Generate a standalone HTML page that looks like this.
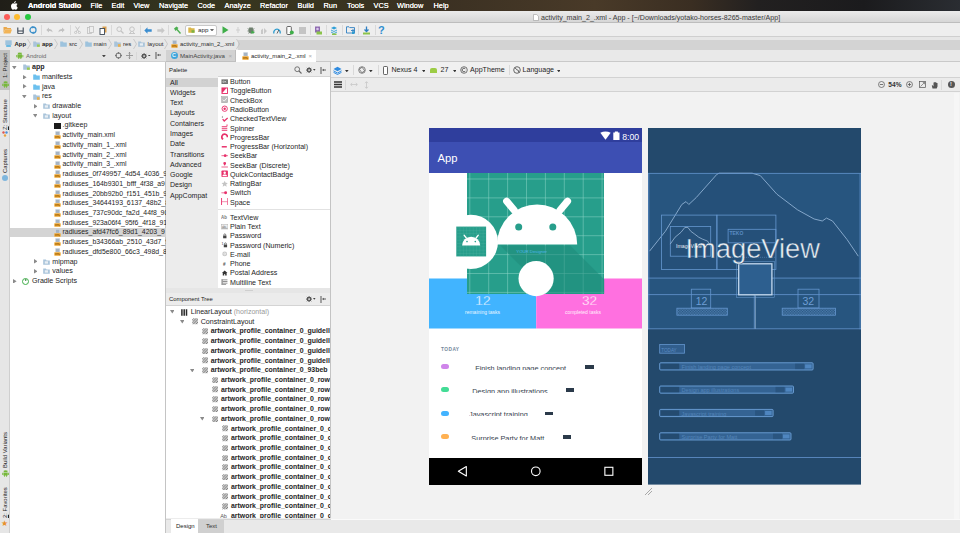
<!DOCTYPE html>
<html><head><meta charset="utf-8"><title>Android Studio</title>
<style>
*{box-sizing:border-box;margin:0;padding:0}
html,body{width:960px;height:533px;overflow:hidden;background:#ececec;font-family:"Liberation Sans",sans-serif;font-size:7.1px;color:#222}
#root{position:absolute;left:0;top:0;width:960px;height:533px;overflow:hidden}
#root div,#root span,#root svg{position:absolute;white-space:nowrap}
.t{line-height:10px;height:10px;font-size:7.1px;color:#1e1e1e}
.s{line-height:10px;height:10px;font-size:6px;color:#2a2a2a}
.b{font-weight:bold}
#menubar{left:0;top:0;width:960px;height:11px;background:linear-gradient(90deg,#201e18 0,#2a2a1c 10%,#37371f 20%,#38341f 33%,#3a3022 45%,#493a28 62%,#3a2e22 72%,#222020 79%,#1b1b1d 90%,#2a2d32 100%)}
#menubar span{color:#fff;font-size:7.4px;line-height:11px;top:0;height:11px;text-shadow:0 0 .3px #fff}
#titlebar{left:0;top:11px;width:960px;height:12px;background:linear-gradient(#ebebeb,#d6d6d6);border-bottom:1px solid #bdbdbd}
#toolbar{left:0;top:23px;width:960px;height:14px;background:#eeeeee;border-bottom:1px solid #cfcfcf}
#navstrip{left:0;top:37px;width:960px;height:3px;background:#e6e6e6}
#navbar{left:0;top:39.5px;width:960px;height:10px;background:#d3d3d3}
#crumbs{left:0;top:-2px;width:238px;height:12px;background:#e7e7e7}
#tabrow{left:166px;top:49.5px;width:794px;height:12.5px;background:#e9e9e9;border-bottom:1px solid #c9c9c9}
#lstrip{left:0;top:49.5px;width:10px;height:484px;background:#e6e6e6;border-right:1px solid #cfcfcf}
.vt{transform-origin:0 0;transform:rotate(-90deg);font-size:5.9px;line-height:10px;height:10px;color:#222}
#proj{left:10px;top:49.5px;width:156px;height:484px;background:#fff;border-right:1px solid #c4c4c4}
#projhead{left:0;top:0;width:156px;height:12.5px;background:#e4e4e4;border-bottom:1px solid #cfcfcf}
.row{left:0;width:156px;height:9.72px}
.row span{top:-0.2px}
.arr{width:0;height:0;border-style:solid}
.ar{border-width:2.3px 0 2.3px 3.6px;border-color:transparent transparent transparent #8a8a8a}
.ad{border-width:3.6px 2.3px 0 2.3px;border-color:#8a8a8a transparent transparent transparent}
.sep{width:1px;background:#d9d9d9}
#palette{left:166px;top:62px;width:165px;height:230.5px;background:#fff;overflow:hidden;border-right:1px solid #c4c4c4}
#ctree{left:166px;top:292.5px;width:165px;height:225.5px;background:#fff;border-right:1px solid #c4c4c4;overflow:hidden}
.ph{left:0;top:0;width:164px;height:13px;background:#ececec;border-bottom:1px solid #d4d4d4}
#design{left:331px;top:62px;width:629px;height:471px;background:#f2f2f2}
</style></head><body><div id="root">
<div id="menubar"><svg style="left:10.800px;top:.8px" width="7" height="8.800" viewBox="0 0 14 17.600"><path fill="#fff" d="M9.800 4.300c1.300 0 2.500.6 3.300 1.700-1.300.8-1.900 1.900-1.900 3.300 0 1.600.9 2.900 2.300 3.500-.3.900-.7 1.700-1.200 2.500-.8 1.200-1.600 2.100-2.700 2.100s-1.500-.7-2.800-.7-1.700.7-2.800.7S2.200 16.500 1.400 15.300C.5 13.900 0 12.100 0 10.400c0-3.200 2-5.900 4.500-5.900 1.100 0 2 .7 2.700.7s1.600-.9 2.600-.9zM9.700 0c.1 1.100-.3 2.100-.9 2.800-.7.800-1.700 1.400-2.700 1.300-.1-1 .4-2.100 1-2.800C7.800.5 8.900 0 9.700 0z"/></svg><span class="b" style="left:28px">Android Studio</span><span style="left:90.5px">File</span><span style="left:111.5px">Edit</span><span style="left:133.5px">View</span><span style="left:159px">Navigate</span><span style="left:197.5px">Code</span><span style="left:224.5px">Analyze</span><span style="left:260px">Refactor</span><span style="left:297.5px">Build</span><span style="left:323.5px">Run</span><span style="left:347px">Tools</span><span style="left:373.5px">VCS</span><span style="left:397px">Window</span><span style="left:433.5px">Help</span></div>
<div id="titlebar"><div style="left:4px;top:3px;width:6.4px;height:6.4px;border-radius:50%;background:#fc5b57"></div><div style="left:14px;top:3px;width:6.4px;height:6.4px;border-radius:50%;background:#fdbb2e"></div><div style="left:24.5px;top:3px;width:6.4px;height:6.4px;border-radius:50%;background:#27c840"></div><svg style="left:533px;top:2.5px" width="6" height="7" viewBox="0 0 6 7"><path d="M.5.5h3.200l1.800 1.800v4.200h-5z" fill="#fff" stroke="#9a9a9a" stroke-width=".6"/></svg><span class="t" style="left:541px;top:1.5px;color:#3a3a3a">activity_main_2_.xml - App - [~/Downloads/yotako-horses-8265-master/App]</span></div>
<div id="toolbar"><svg style="left:2.5px;top:3px" width="9" height="8" viewBox="0 0 9 8"><path d="M.5 1h3l1 1h3.500v1.500H2L.5 7z" fill="#e9a84c"/><path d="M2 3.500h7L7.500 7.500H.5z" fill="#f2b457"/></svg><svg style="left:16.5px;top:3.5px" width="7" height="7" viewBox="0 0 7 7"><path d="M.8.500v6M6.200.500v6M.8 4h5.400" stroke="#3c4754" stroke-width="1.100" fill="none"/><path d="M.8 6.500h5.400" stroke="#3c4754" stroke-width=".8"/></svg><svg style="left:29px;top:3px" width="8" height="8" viewBox="0 0 8 8"><circle cx="4" cy="4" r="3" fill="none" stroke="#3b8fc9" stroke-width="1.300"/><path d="M3 .2l2.500 1-2 1.500zM5 7.800l-2.500-1 2-1.500z" fill="#3b8fc9"/><rect x="3.300" y="2.500" width="1.400" height="3" fill="#eee"/></svg><div class="sep" style="left:41px;top:2px;height:10px"></div><div class="sep" style="left:70px;top:2px;height:10px"></div><div class="sep" style="left:111px;top:2px;height:10px"></div><div class="sep" style="left:140px;top:2px;height:10px"></div><div class="sep" style="left:167.5px;top:2px;height:10px"></div><div class="sep" style="left:310.3px;top:2px;height:10px"></div><div class="sep" style="left:326.3px;top:2px;height:10px"></div><div class="sep" style="left:342.2px;top:2px;height:10px"></div><div class="sep" style="left:358.2px;top:2px;height:10px"></div><div class="sep" style="left:374.5px;top:2px;height:10px"></div><svg style="left:45.5px;top:4px" width="7" height="6" viewBox="0 0 7 6"><path d="M.3 3L3 .5v1.500c2 0 3.500 1 3.700 3.500C6 4.500 4.800 4 3 4v1.500z" fill="#c2c2c2"/></svg><svg style="left:57.5px;top:4px" width="7" height="6" viewBox="0 0 7 6"><path d="M6.700 3L4 .5v1.500C2 2 .5 3 .3 5.500 1 4.500 2.200 4 4 4v1.500z" fill="#c2c2c2"/></svg><svg style="left:73.5px;top:3px" width="7" height="8" viewBox="0 0 7 8"><path d="M1.500.5L5 6M5.500.5L2 6" stroke="#c0c0c0" stroke-width=".9" fill="none"/><circle cx="1.600" cy="6.500" r="1.100" fill="none" stroke="#c0c0c0" stroke-width=".8"/><circle cx="5.400" cy="6.500" r="1.100" fill="none" stroke="#c0c0c0" stroke-width=".8"/></svg><svg style="left:86.5px;top:3px" width="7" height="8" viewBox="0 0 7 8"><rect x=".5" y="1.500" width="4" height="6" fill="#eee" stroke="#c0c0c0" stroke-width=".8"/><rect x="2.500" y=".5" width="4" height="6" fill="#eee" stroke="#c0c0c0" stroke-width=".8"/></svg><svg style="left:99px;top:2.5px" width="8" height="9" viewBox="0 0 8 9"><rect x="3.500" y=".5" width="4" height="6" fill="#d9a050"/><rect x="1" y="2.500" width="4.500" height="6" fill="#fff" stroke="#3c4754" stroke-width=".9"/></svg><svg style="left:115.5px;top:3px" width="8" height="8" viewBox="0 0 8 8"><circle cx="3.200" cy="3.200" r="2.300" fill="none" stroke="#c4c4c4" stroke-width="1"/><path d="M5 5l2.500 2.500" stroke="#c4c4c4" stroke-width="1.200"/></svg><svg style="left:127.5px;top:3px" width="8" height="8" viewBox="0 0 8 8"><circle cx="4" cy="3.200" r="2.300" fill="none" stroke="#c4c4c4" stroke-width="1"/><path d="M1 7.500h6M2 7.500l1-2M6 7.500l-1-2" stroke="#c4c4c4" stroke-width=".9"/></svg><svg style="left:144px;top:3.5px" width="8" height="7" viewBox="0 0 8 7"><path d="M.3 3.500L3.500.3v2h4.200v2.400H3.500v2z" fill="#3a8dd0"/></svg><svg style="left:156.5px;top:3.5px" width="8" height="7" viewBox="0 0 8 7"><path d="M7.700 3.500L4.500.3v2H.3v2.400h4.200v2z" fill="#c8c8c8"/></svg><svg style="left:172.5px;top:3px" width="9" height="8" viewBox="0 0 9 8"><path d="M1 2.500L3.500.5l2 1.500-1 1L8 7l-1 1-3.500-4-1 1z" fill="#4caf50"/></svg><div style="left:184.5px;top:1.500px;width:32px;height:11px;background:#fff;border:1px solid #c8c8c8;border-radius:2px"></div><svg style="left:187.5px;top:3.5px" width="7" height="6" viewBox="0 0 7 6"><path d="M.3.500h2.500l.8.800h3v4.400H.3z" fill="#d9b64a"/><rect x="3.500" y="3.200" width="3" height="2.500" fill="#7cb342"/></svg><span class="s" style="left:198px;top:1.700px;font-size:6.200px">app</span><svg style="left:210px;top:5.8px" width="4" height="2.6" viewBox="0 0 4 2.6"><path d="M0 0H4L2.0 2.6z" fill="#666"/></svg><svg style="left:221.5px;top:3px" width="7" height="8" viewBox="0 0 7 8"><path d="M.5.3L6.500 4 .5 7.700z" fill="#3fae49"/></svg><svg style="left:235.5px;top:4px" width="4" height="6" viewBox="0 0 4 6"><path d="M2 0v6M0 3h4" stroke="#cfcfcf" stroke-width="1"/></svg><svg style="left:247px;top:3px" width="8" height="8" viewBox="0 0 8 8"><ellipse cx="4" cy="4.500" rx="2.600" ry="3" fill="#6e7f6e"/><path d="M.5 2.500l2 1M7.500 2.500l-2 1M.3 5h1.500M7.700 5H6.200M1 7.500l1.500-1M7 7.500L5.500 6.500M2.500 1L3.200 2M5.500 1L4.800 2" stroke="#6e7f6e" stroke-width=".6"/><path d="M4.500 4.500L8 6.200 4.500 8z" fill="#3fae49"/></svg><svg style="left:259.5px;top:3.5px" width="8" height="7" viewBox="0 0 8 7"><path d="M1 7V3l2-1.500v5.500zM4 7V1l3 3z" fill="#c8c8c8"/></svg><svg style="left:272.5px;top:3.5px" width="8" height="7" viewBox="0 0 8 7"><path d="M1 6.500A3.200 3.200 0 1 1 7 6.500" fill="none" stroke="#2f9ccf" stroke-width="1.300"/><path d="M4 6.500L5.800 3" stroke="#444" stroke-width=".8"/></svg><svg style="left:285.5px;top:2.5px" width="8" height="9" viewBox="0 0 8 9"><rect x=".8" y=".5" width="4.500" height="8" rx=".8" fill="#fff" stroke="#555" stroke-width=".9"/><circle cx="5.800" cy="6.500" r="2" fill="#3fae49"/></svg><div style="left:298.5px;top:3.500px;width:7px;height:7px;background:#c4c4c4"></div><svg style="left:313.5px;top:2.5px" width="8" height="9" viewBox="0 0 8 9"><rect x="1" y=".5" width="5" height="6" fill="#8e6bb0"/><circle cx="3.500" cy="3" r="1.300" fill="#d9c7ea"/><rect x="2.500" y="5.500" width="5.500" height="3" fill="#8bc34a"/></svg><svg style="left:329.5px;top:2.5px" width="8" height="9" viewBox="0 0 8 9"><path d="M1 2l3-1.500L7 2 4 3.500z" fill="#30a0d8"/><path d="M1 4l3 1.500L7 4M1 6l3 1.500L7 6" fill="none" stroke="#30a0d8" stroke-width=".9"/><rect x="2" y="7.500" width="4.500" height="1.500" fill="#8bc34a"/></svg><svg style="left:346px;top:3px" width="9" height="8" viewBox="0 0 9 8"><path d="M.5.800h2.500l.8.800h4.700v5.400H.5z" fill="none" stroke="#2f7fc1" stroke-width=".9"/><path d="M5 4.500h3.500M7 3v3" stroke="#2f7fc1" stroke-width=".9"/><rect x="6" y="5.500" width="2.500" height="2.500" fill="#2f9ccf"/></svg><svg style="left:361.5px;top:2.5px" width="9" height="9" viewBox="0 0 9 9"><path d="M4.500.5v4.500M2.500 3.500l2 2 2-2" fill="none" stroke="#2f7fc1" stroke-width="1.300"/><rect x="1" y="6.500" width="7" height="2" fill="#8bc34a"/></svg><span style="left:378px;top:0;font-size:11px;line-height:14px;height:14px;font-weight:bold;color:#2f8fd0">?</span></div>
<div id="navstrip"></div><div id="navbar"><div id="crumbs"></div><div style="left:0;top:-1px;width:240px;height:10px"><svg style="left:4.5px;top:1.5px" width="7" height="7" viewBox="0 0 7 7"><rect x=".3" y=".3" width="6.400" height="4.800" fill="#9ec3dd"/><rect x="1.200" y="5.300" width="4.600" height="1.400" fill="#35a7e0"/></svg><span class="s b" style="left:14.5px;top:0;color:#222">App</span><svg style="left:27px;top:0px" width="4" height="10" viewBox="0 0 4 10"><path d="M.5 0L3.500 5 .5 10" fill="none" stroke="#bdbdbd" stroke-width=".7"/></svg><svg style="left:32.5px;top:2px" width="7" height="6" viewBox="0 0 7 6"><path d="M.2.500h2.600l.8.900h3.200v4.300H.2z" fill="#a9c4da"/><rect x="4" y="3.500" width="2.800" height="2.300" fill="#9acb4a"/></svg><span class="s b" style="left:42px;top:0;color:#222">app</span><svg style="left:54px;top:0px" width="4" height="10" viewBox="0 0 4 10"><path d="M.5 0L3.500 5 .5 10" fill="none" stroke="#bdbdbd" stroke-width=".7"/></svg><svg style="left:59.5px;top:2px" width="7" height="6" viewBox="0 0 7 6"><path d="M.2.500h2.600l.8.900h3.200v4.300H.2z" fill="#9ec3dd"/></svg><span class="s" style="left:69px;top:0">src</span><svg style="left:79px;top:0px" width="4" height="10" viewBox="0 0 4 10"><path d="M.5 0L3.500 5 .5 10" fill="none" stroke="#bdbdbd" stroke-width=".7"/></svg><svg style="left:84.5px;top:2px" width="7" height="6" viewBox="0 0 7 6"><path d="M.2.500h2.600l.8.900h3.200v4.300H.2z" fill="#9ec3dd"/></svg><span class="s" style="left:93.5px;top:0">main</span><svg style="left:108px;top:0px" width="4" height="10" viewBox="0 0 4 10"><path d="M.5 0L3.500 5 .5 10" fill="none" stroke="#bdbdbd" stroke-width=".7"/></svg><svg style="left:113.5px;top:2px" width="7" height="6" viewBox="0 0 7 6"><path d="M.2.500h2.600l.8.900h3.200v4.300H.2z" fill="#a9c4da"/><rect x="4" y="3.200" width="2.600" height="2.600" fill="#e9b04c"/></svg><span class="s" style="left:123px;top:0">res</span><svg style="left:133px;top:0px" width="4" height="10" viewBox="0 0 4 10"><path d="M.5 0L3.500 5 .5 10" fill="none" stroke="#bdbdbd" stroke-width=".7"/></svg><svg style="left:138px;top:2px" width="7" height="6" viewBox="0 0 7 6"><path d="M.2.500h2.600l.8.900h3.200v4.300H.2z" fill="#a9c4da"/><rect x="1.800" y="2.300" width="3.200" height="2.300" fill="#e8eef4"/></svg><span class="s" style="left:147.5px;top:0">layout</span><svg style="left:163.5px;top:0px" width="4" height="10" viewBox="0 0 4 10"><path d="M.5 0L3.500 5 .5 10" fill="none" stroke="#bdbdbd" stroke-width=".7"/></svg><svg style="left:170.5px;top:1px" width="7" height="8" viewBox="0 0 7 8"><rect x="1.200" y=".3" width="4.800" height="4" fill="#c9d3de"/><path d="M2 1.300h3.200M2 2.300h3.200M2 3.300h3.200" stroke="#7d8fa5" stroke-width=".5"/><rect x=".3" y="4.300" width="6.400" height="3.400" rx=".4" fill="#f0a732"/><path d="M1.300 5.300l1 1.400m0-1.400l-1 1.400M3 6.700V5.300l.6.800.6-.8v1.400M5 5.300v1.400h.9" stroke="#7a4b00" stroke-width=".45" fill="none"/></svg><span class="s" style="left:180px;top:0;font-size:5.850px">activity_main_2_.xml</span><svg style="left:235.5px;top:0px" width="4" height="10" viewBox="0 0 4 10"><path d="M.5 0L3.500 5 .5 10" fill="none" stroke="#bdbdbd" stroke-width=".7"/></svg></div></div>
<div id="tabrow"><div style="left:0;top:0;width:70px;height:12.500px;background:#d2d2d2;border-right:1px solid #bdbdbd;border-bottom:1px solid #c0c0c0"></div><div style="left:4.500px;top:2.500px;width:7px;height:7px;border-radius:50%;background:#3ea6dc"></div><span style="left:6px;top:1.400px;font-size:5.500px;line-height:9px;color:#e8f4fb;font-weight:bold">C</span><span class="s" style="left:14px;top:1.200px;font-size:6.100px;color:#444">MainActivity.java</span><span style="left:62.500px;top:1px;font-size:6px;line-height:10px;color:#aaa">×</span><div style="left:70px;top:0;width:80px;height:12.500px;background:#fff"></div><svg style="left:75.5px;top:2px" width="7" height="8" viewBox="0 0 7 8"><rect x="1.200" y=".3" width="4.800" height="4" fill="#c9d3de"/><path d="M2 1.300h3.200M2 2.300h3.200M2 3.300h3.200" stroke="#7d8fa5" stroke-width=".5"/><rect x=".3" y="4.300" width="6.400" height="3.400" rx=".4" fill="#f0a732"/><path d="M1.300 5.300l1 1.400m0-1.400l-1 1.400M3 6.700V5.300l.6.800.6-.8v1.400M5 5.300v1.400h.9" stroke="#7a4b00" stroke-width=".45" fill="none"/></svg><span class="s" style="left:85px;top:1.200px;font-size:5.900px;color:#222">activity_main_2_.xml</span><span style="left:142.500px;top:1px;font-size:6px;line-height:10px;color:#aaa">×</span></div>
<div id="lstrip"><div style="left:0;top:0;width:10px;height:40.500px;background:#c2c2c2"></div><span class="vt" style="left:.3px;top:28.8px">1: Project</span><svg style="left:1.6px;top:31px" width="7.2" height="7.2" viewBox="0 0 8 8"><path fill="#77b83b" d="M1.600 2.600a2.400 2.200 0 0 1 4.800 0zM1.600 3h4.800v3.100H1.600zM.3 3.100h.9v2.400H.3zM6.800 3.100h.9v2.400h-.9zM2.400 6.100h1v1.500h-1zM4.600 6.100h1v1.500h-1z"/><path d="M2.300.4l.6.900M5.700.4l-.6.900" stroke="#77b83b" stroke-width=".4"/></svg><span class="vt" style="left:.3px;top:80.2px"><u>Z</u>: Structure</span><svg style="left:2px;top:81.5px" width="6" height="6" viewBox="0 0 6 6"><circle cx="1.500" cy="1.500" r="1.200" fill="#e0574f"/><circle cx="4.500" cy="1.500" r="1.200" fill="#4a90d9"/><circle cx="3" cy="4.500" r="1.200" fill="#e9a23b"/></svg><span class="vt" style="left:.3px;top:123.2px">Captures</span><div style="left:2px;top:125.500px;width:6px;height:6px;border-radius:50%;background:#7fb6dd"></div><span class="vt" style="left:.3px;top:418.4px">Build Variants</span><svg style="left:1.6px;top:420px" width="7.2" height="7.2" viewBox="0 0 8 8"><path fill="#77b83b" d="M1.600 2.600a2.400 2.200 0 0 1 4.800 0zM1.600 3h4.800v3.100H1.600zM.3 3.100h.9v2.400H.3zM6.800 3.100h.9v2.400h-.9zM2.400 6.100h1v1.500h-1zM4.600 6.100h1v1.500h-1z"/><path d="M2.300.4l.6.900M5.700.4l-.6.900" stroke="#77b83b" stroke-width=".4"/></svg><span class="vt" style="left:.3px;top:468.1px"><u>2</u>: Favorites</span><span style="left:1px;top:469.500px;font-size:8px;line-height:10px;color:#e8912b">★</span></div>
<div id="proj"><div id="projhead"><svg style="left:6px;top:2.3px" width="7.6" height="7.6" viewBox="0 0 8 8"><path fill="#77b83b" d="M1.600 2.600a2.400 2.200 0 0 1 4.800 0zM1.600 3h4.800v3.100H1.600zM.3 3.100h.9v2.400H.3zM6.800 3.100h.9v2.400h-.9zM2.400 6.100h1v1.500h-1zM4.600 6.100h1v1.500h-1z"/><path d="M2.300.4l.6.900M5.700.4l-.6.900" stroke="#77b83b" stroke-width=".4"/></svg><span class="s" style="left:16px;top:1.200px;font-size:5.900px;color:#666">Android</span><svg style="left:92px;top:5.2px" width="3.8" height="2.4" viewBox="0 0 3.8 2.4"><path d="M0 0H3.8L1.9 2.4z" fill="#444"/></svg><svg style="left:104.5px;top:2.5px" width="7" height="7" viewBox="0 0 7 7"><circle cx="3.500" cy="3.500" r="2.600" fill="none" stroke="#666" stroke-width="1"/><path d="M3.500 0v2M3.500 5v2M0 3.500h2M5 3.500h2" stroke="#666" stroke-width=".7"/></svg><svg style="left:116px;top:2.5px" width="7" height="7" viewBox="0 0 7 7"><path d="M3.500 0v7M0 3.500h7" stroke="#8a8a8a" stroke-width=".8"/><path d="M2.500 1.500l1-1.200 1 1.200M2.500 5.500l1 1.200 1-1.200" fill="none" stroke="#8a8a8a" stroke-width=".6"/></svg><div class="sep" style="left:126px;top:2px;height:8px;background:#d8d8d8"></div><svg style="left:131px;top:3px" width="6.2" height="6.2" viewBox="0 0 7 7"><circle cx="3.500" cy="3.500" r="2" fill="none" stroke="#555" stroke-width="1.400"/><path d="M3.500 0v7M0 3.500h7M1 1l5 5M6 1L1 6" stroke="#555" stroke-width=".9"/><circle cx="3.500" cy="3.500" r="1" fill="#e4e4e4"/></svg><svg style="left:138.3px;top:5.3px" width="2.6" height="1.7" viewBox="0 0 2.6 1.7"><path d="M0 0H2.6L1.3 1.7z" fill="#444"/></svg><svg style="left:144.5px;top:2.5px" width="7" height="7" viewBox="0 0 7 7"><path d="M1 0v7" stroke="#555" stroke-width="1"/><path d="M2.500 3h3.500" stroke="#555" stroke-width=".9"/><path d="M2.300 3l1.500-1.200v2.400z" fill="#555"/></svg></div><div class="row" style="top:12.84px"><svg style="left:2.2px;top:3.3px" width="4.600" height="3.400" viewBox="0 0 4.600 3.400"><path d="M0 0H4.600L2.300 3.400z" fill="#8a8a8a"/></svg><svg style="left:13px;top:2px" width="7" height="6" viewBox="0 0 7 6"><path d="M.2.500h2.600l.8.900h3.200v4.300H.2z" fill="#a9c4da"/><rect x="4" y="3.500" width="2.800" height="2.300" fill="#9acb4a"/></svg><span class="t b" style="left:22px">app</span></div><div class="row" style="top:22.56px"><svg style="left:13.3px;top:2.7px" width="3.600" height="4.600" viewBox="0 0 3.600 4.600"><path d="M0 0L3.600 2.300 0 4.600z" fill="#8a8a8a"/></svg><svg style="left:23px;top:2px" width="7" height="6" viewBox="0 0 7 6"><path d="M.2.500h2.600l.8.900h3.200v4.300H.2z" fill="#6cc0ee"/></svg><span class="t" style="left:32px">manifests</span></div><div class="row" style="top:32.28px"><svg style="left:13.3px;top:2.7px" width="3.600" height="4.600" viewBox="0 0 3.600 4.600"><path d="M0 0L3.600 2.300 0 4.600z" fill="#8a8a8a"/></svg><svg style="left:23px;top:2px" width="7" height="6" viewBox="0 0 7 6"><path d="M.2.500h2.600l.8.900h3.200v4.300H.2z" fill="#6cc0ee"/></svg><span class="t" style="left:32px">java</span></div><div class="row" style="top:42.00px"><svg style="left:12.2px;top:3.3px" width="4.600" height="3.400" viewBox="0 0 4.600 3.400"><path d="M0 0H4.600L2.300 3.400z" fill="#8a8a8a"/></svg><svg style="left:23px;top:2px" width="7" height="6" viewBox="0 0 7 6"><path d="M.2.500h2.600l.8.900h3.200v4.300H.2z" fill="#a9c4da"/><rect x="4" y="3.200" width="2.600" height="2.600" fill="#e9b04c"/></svg><span class="t" style="left:32px">res</span></div><div class="row" style="top:51.72px"><svg style="left:23.8px;top:2.7px" width="3.600" height="4.600" viewBox="0 0 3.600 4.600"><path d="M0 0L3.600 2.300 0 4.600z" fill="#8a8a8a"/></svg><svg style="left:33.3px;top:2px" width="7" height="6" viewBox="0 0 7 6"><path d="M.2.500h2.600l.8.900h3.200v4.300H.2z" fill="#a9c4da"/><rect x="1.800" y="2.300" width="3.200" height="2.300" fill="#e8eef4"/></svg><span class="t" style="left:42.3px">drawable</span></div><div class="row" style="top:61.44px"><svg style="left:22.7px;top:3.3px" width="4.600" height="3.400" viewBox="0 0 4.600 3.400"><path d="M0 0H4.600L2.300 3.400z" fill="#8a8a8a"/></svg><svg style="left:33.3px;top:2px" width="7" height="6" viewBox="0 0 7 6"><path d="M.2.500h2.600l.8.900h3.200v4.300H.2z" fill="#a9c4da"/><rect x="1.800" y="2.300" width="3.200" height="2.300" fill="#e8eef4"/></svg><span class="t" style="left:42.3px">layout</span></div><div class="row" style="top:71.16px"><div style="left:43.5px;top:2px;width:7px;height:6px;background:#1c1c1c"></div><span class="t" style="left:52.5px">.gitkeep</span></div><div class="row" style="top:80.88px"><svg style="left:43.5px;top:1px" width="7" height="8" viewBox="0 0 7 8"><rect x="1.200" y=".3" width="4.800" height="4" fill="#c9d3de"/><path d="M2 1.300h3.200M2 2.300h3.200M2 3.300h3.200" stroke="#7d8fa5" stroke-width=".5"/><rect x=".3" y="4.300" width="6.400" height="3.400" rx=".4" fill="#f0a732"/><path d="M1.300 5.300l1 1.400m0-1.400l-1 1.400M3 6.700V5.300l.6.800.6-.8v1.400M5 5.300v1.400h.9" stroke="#7a4b00" stroke-width=".45" fill="none"/></svg><span class="t" style="left:52.5px;font-size:6.900px">activity_main.xml</span></div><div class="row" style="top:90.60px"><svg style="left:43.5px;top:1px" width="7" height="8" viewBox="0 0 7 8"><rect x="1.200" y=".3" width="4.800" height="4" fill="#c9d3de"/><path d="M2 1.300h3.200M2 2.300h3.200M2 3.300h3.200" stroke="#7d8fa5" stroke-width=".5"/><rect x=".3" y="4.300" width="6.400" height="3.400" rx=".4" fill="#f0a732"/><path d="M1.300 5.300l1 1.400m0-1.400l-1 1.400M3 6.700V5.300l.6.800.6-.8v1.400M5 5.300v1.400h.9" stroke="#7a4b00" stroke-width=".45" fill="none"/></svg><span class="t" style="left:52.5px;font-size:6.900px">activity_main_1_.xml</span></div><div class="row" style="top:100.32px"><svg style="left:43.5px;top:1px" width="7" height="8" viewBox="0 0 7 8"><rect x="1.200" y=".3" width="4.800" height="4" fill="#c9d3de"/><path d="M2 1.300h3.200M2 2.300h3.200M2 3.300h3.200" stroke="#7d8fa5" stroke-width=".5"/><rect x=".3" y="4.300" width="6.400" height="3.400" rx=".4" fill="#f0a732"/><path d="M1.300 5.300l1 1.400m0-1.400l-1 1.400M3 6.700V5.300l.6.800.6-.8v1.400M5 5.300v1.400h.9" stroke="#7a4b00" stroke-width=".45" fill="none"/></svg><span class="t" style="left:52.5px;font-size:6.900px">activity_main_2_.xml</span></div><div class="row" style="top:110.04px"><svg style="left:43.5px;top:1px" width="7" height="8" viewBox="0 0 7 8"><rect x="1.200" y=".3" width="4.800" height="4" fill="#c9d3de"/><path d="M2 1.300h3.200M2 2.300h3.200M2 3.300h3.200" stroke="#7d8fa5" stroke-width=".5"/><rect x=".3" y="4.300" width="6.400" height="3.400" rx=".4" fill="#f0a732"/><path d="M1.300 5.300l1 1.400m0-1.400l-1 1.400M3 6.700V5.300l.6.800.6-.8v1.400M5 5.300v1.400h.9" stroke="#7a4b00" stroke-width=".45" fill="none"/></svg><span class="t" style="left:52.5px;font-size:6.900px">activity_main_3_.xml</span></div><div class="row" style="top:119.76px"><svg style="left:43.5px;top:1px" width="7" height="8" viewBox="0 0 7 8"><rect x="1.200" y=".3" width="4.800" height="4" fill="#c9d3de"/><path d="M2 1.300h3.200M2 2.300h3.200M2 3.300h3.200" stroke="#7d8fa5" stroke-width=".5"/><rect x=".3" y="4.300" width="6.400" height="3.400" rx=".4" fill="#f0a732"/><path d="M1.300 5.300l1 1.400m0-1.400l-1 1.400M3 6.700V5.300l.6.800.6-.8v1.400M5 5.300v1.400h.9" stroke="#7a4b00" stroke-width=".45" fill="none"/></svg><span class="t" style="left:52.5px;font-size:6.900px">radiuses_0f749957_4d54_4036_9</span></div><div class="row" style="top:129.48px"><svg style="left:43.5px;top:1px" width="7" height="8" viewBox="0 0 7 8"><rect x="1.200" y=".3" width="4.800" height="4" fill="#c9d3de"/><path d="M2 1.300h3.200M2 2.300h3.200M2 3.300h3.200" stroke="#7d8fa5" stroke-width=".5"/><rect x=".3" y="4.300" width="6.400" height="3.400" rx=".4" fill="#f0a732"/><path d="M1.300 5.300l1 1.400m0-1.400l-1 1.400M3 6.700V5.300l.6.800.6-.8v1.400M5 5.300v1.400h.9" stroke="#7a4b00" stroke-width=".45" fill="none"/></svg><span class="t" style="left:52.5px;font-size:6.900px">radiuses_164b9301_bfff_4f38_a9</span></div><div class="row" style="top:139.20px"><svg style="left:43.5px;top:1px" width="7" height="8" viewBox="0 0 7 8"><rect x="1.200" y=".3" width="4.800" height="4" fill="#c9d3de"/><path d="M2 1.300h3.200M2 2.300h3.200M2 3.300h3.200" stroke="#7d8fa5" stroke-width=".5"/><rect x=".3" y="4.300" width="6.400" height="3.400" rx=".4" fill="#f0a732"/><path d="M1.300 5.300l1 1.400m0-1.400l-1 1.400M3 6.700V5.300l.6.800.6-.8v1.400M5 5.300v1.400h.9" stroke="#7a4b00" stroke-width=".45" fill="none"/></svg><span class="t" style="left:52.5px;font-size:6.900px">radiuses_20bb92b0_f151_451b_9</span></div><div class="row" style="top:148.92px"><svg style="left:43.5px;top:1px" width="7" height="8" viewBox="0 0 7 8"><rect x="1.200" y=".3" width="4.800" height="4" fill="#c9d3de"/><path d="M2 1.300h3.200M2 2.300h3.200M2 3.300h3.200" stroke="#7d8fa5" stroke-width=".5"/><rect x=".3" y="4.300" width="6.400" height="3.400" rx=".4" fill="#f0a732"/><path d="M1.300 5.300l1 1.400m0-1.400l-1 1.400M3 6.700V5.300l.6.800.6-.8v1.400M5 5.300v1.400h.9" stroke="#7a4b00" stroke-width=".45" fill="none"/></svg><span class="t" style="left:52.5px;font-size:6.900px">radiuses_34644193_6137_48b2_8</span></div><div class="row" style="top:158.64px"><svg style="left:43.5px;top:1px" width="7" height="8" viewBox="0 0 7 8"><rect x="1.200" y=".3" width="4.800" height="4" fill="#c9d3de"/><path d="M2 1.300h3.200M2 2.300h3.200M2 3.300h3.200" stroke="#7d8fa5" stroke-width=".5"/><rect x=".3" y="4.300" width="6.400" height="3.400" rx=".4" fill="#f0a732"/><path d="M1.300 5.300l1 1.400m0-1.400l-1 1.400M3 6.700V5.300l.6.800.6-.8v1.400M5 5.300v1.400h.9" stroke="#7a4b00" stroke-width=".45" fill="none"/></svg><span class="t" style="left:52.5px;font-size:6.900px">radiuses_737c90dc_fa2d_44f8_90</span></div><div class="row" style="top:168.36px"><svg style="left:43.5px;top:1px" width="7" height="8" viewBox="0 0 7 8"><rect x="1.200" y=".3" width="4.800" height="4" fill="#c9d3de"/><path d="M2 1.300h3.200M2 2.300h3.200M2 3.300h3.200" stroke="#7d8fa5" stroke-width=".5"/><rect x=".3" y="4.300" width="6.400" height="3.400" rx=".4" fill="#f0a732"/><path d="M1.300 5.300l1 1.400m0-1.400l-1 1.400M3 6.700V5.300l.6.800.6-.8v1.400M5 5.300v1.400h.9" stroke="#7a4b00" stroke-width=".45" fill="none"/></svg><span class="t" style="left:52.5px;font-size:6.900px">radiuses_923a06f4_95f6_4f18_91</span></div><div class="row" style="top:178.08px;background:#d4d4d4"><svg style="left:43.5px;top:1px" width="7" height="8" viewBox="0 0 7 8"><rect x="1.200" y=".3" width="4.800" height="4" fill="#c9d3de"/><path d="M2 1.300h3.200M2 2.300h3.200M2 3.300h3.200" stroke="#7d8fa5" stroke-width=".5"/><rect x=".3" y="4.300" width="6.400" height="3.400" rx=".4" fill="#f0a732"/><path d="M1.300 5.300l1 1.400m0-1.400l-1 1.400M3 6.700V5.300l.6.800.6-.8v1.400M5 5.300v1.400h.9" stroke="#7a4b00" stroke-width=".45" fill="none"/></svg><span class="t" style="left:52.5px;font-size:6.900px">radiuses_afd47fc6_89d1_4203_9</span></div><div class="row" style="top:187.80px"><svg style="left:43.5px;top:1px" width="7" height="8" viewBox="0 0 7 8"><rect x="1.200" y=".3" width="4.800" height="4" fill="#c9d3de"/><path d="M2 1.300h3.200M2 2.300h3.200M2 3.300h3.200" stroke="#7d8fa5" stroke-width=".5"/><rect x=".3" y="4.300" width="6.400" height="3.400" rx=".4" fill="#f0a732"/><path d="M1.300 5.300l1 1.400m0-1.400l-1 1.400M3 6.700V5.300l.6.800.6-.8v1.400M5 5.300v1.400h.9" stroke="#7a4b00" stroke-width=".45" fill="none"/></svg><span class="t" style="left:52.5px;font-size:6.900px">radiuses_b34366ab_2510_43d7_9</span></div><div class="row" style="top:197.52px"><svg style="left:43.5px;top:1px" width="7" height="8" viewBox="0 0 7 8"><rect x="1.200" y=".3" width="4.800" height="4" fill="#c9d3de"/><path d="M2 1.300h3.200M2 2.300h3.200M2 3.300h3.200" stroke="#7d8fa5" stroke-width=".5"/><rect x=".3" y="4.300" width="6.400" height="3.400" rx=".4" fill="#f0a732"/><path d="M1.300 5.300l1 1.400m0-1.400l-1 1.400M3 6.700V5.300l.6.800.6-.8v1.400M5 5.300v1.400h.9" stroke="#7a4b00" stroke-width=".45" fill="none"/></svg><span class="t" style="left:52.5px;font-size:6.900px">radiuses_dfd5e800_66c3_498d_8</span></div><div class="row" style="top:207.24px"><svg style="left:23.8px;top:2.7px" width="3.600" height="4.600" viewBox="0 0 3.600 4.600"><path d="M0 0L3.600 2.300 0 4.600z" fill="#8a8a8a"/></svg><svg style="left:33.3px;top:2px" width="7" height="6" viewBox="0 0 7 6"><path d="M.2.500h2.600l.8.900h3.200v4.300H.2z" fill="#a9c4da"/><rect x="1.800" y="2.300" width="3.200" height="2.300" fill="#e8eef4"/></svg><span class="t" style="left:42.3px">mipmap</span></div><div class="row" style="top:216.96px"><svg style="left:23.8px;top:2.7px" width="3.600" height="4.600" viewBox="0 0 3.600 4.600"><path d="M0 0L3.600 2.300 0 4.600z" fill="#8a8a8a"/></svg><svg style="left:33.3px;top:2px" width="7" height="6" viewBox="0 0 7 6"><path d="M.2.500h2.600l.8.900h3.200v4.300H.2z" fill="#a9c4da"/><rect x="1.800" y="2.300" width="3.200" height="2.300" fill="#e8eef4"/></svg><span class="t" style="left:42.3px">values</span></div><div class="row" style="top:226.68px"><svg style="left:3.3px;top:2.7px" width="3.600" height="4.600" viewBox="0 0 3.600 4.600"><path d="M0 0L3.600 2.300 0 4.600z" fill="#8a8a8a"/></svg><div style="left:12px;top:1.500px;width:7px;height:7px;border-radius:50%;border:1.200px solid #3fae49"></div><div class="arr" style="left:14.5px;top:3.200px;border-width:1.800px 0 1.800px 2.800px;border-color:transparent transparent transparent #2b7a33"></div><span class="t" style="left:22px">Gradle Scripts</span></div></div>
<div id="palette"><div class="ph" style="top:0;height:14.500px"><span class="s" style="left:3px;top:3px;font-size:5.900px;color:#222">Palette</span><svg style="left:127.5px;top:4px" width="8" height="8" viewBox="0 0 8 8"><circle cx="3.200" cy="3.200" r="2.400" fill="none" stroke="#666" stroke-width=".9"/><path d="M5 5l2.500 2.500" stroke="#666" stroke-width="1.100"/></svg><svg style="left:140px;top:4.8px" width="6.2" height="6.2" viewBox="0 0 7 7"><circle cx="3.500" cy="3.500" r="2" fill="none" stroke="#555" stroke-width="1.400"/><path d="M3.500 0v7M0 3.500h7M1 1l5 5M6 1L1 6" stroke="#555" stroke-width=".9"/><circle cx="3.500" cy="3.500" r="1" fill="#ececec"/></svg><svg style="left:147.3px;top:7.3px" width="2.6" height="1.7" viewBox="0 0 2.6 1.7"><path d="M0 0H2.6L1.3 1.7z" fill="#444"/></svg><svg style="left:154px;top:4.5px" width="7" height="7" viewBox="0 0 7 7"><path d="M1 0v7" stroke="#555" stroke-width="1"/><path d="M2.500 3h3.500" stroke="#555" stroke-width=".9"/><path d="M2.300 3l1.500-1.200v2.400z" fill="#555"/></svg></div><div style="left:0;top:14px;width:52px;height:216.500px;background:#ececec"></div><div style="left:0;top:15.500px;width:52px;height:9.500px;background:#d2d2d2"></div><span class="t" style="left:4px;top:15.60px;font-size:7.050px">All</span><span class="t" style="left:4px;top:25.88px;font-size:7.050px">Widgets</span><span class="t" style="left:4px;top:36.16px;font-size:7.050px">Text</span><span class="t" style="left:4px;top:46.44px;font-size:7.050px">Layouts</span><span class="t" style="left:4px;top:56.72px;font-size:7.050px">Containers</span><span class="t" style="left:4px;top:67.00px;font-size:7.050px">Images</span><span class="t" style="left:4px;top:77.28px;font-size:7.050px">Date</span><span class="t" style="left:4px;top:87.56px;font-size:7.050px">Transitions</span><span class="t" style="left:4px;top:97.84px;font-size:7.050px">Advanced</span><span class="t" style="left:4px;top:108.12px;font-size:7.050px">Google</span><span class="t" style="left:4px;top:118.40px;font-size:7.050px">Design</span><span class="t" style="left:4px;top:128.68px;font-size:7.050px">AppCompat</span><svg style="left:54.7px;top:15.7px" width="7.4" height="7.4" viewBox="0 0 8 8"><rect x=".5" y="1.500" width="7" height="5" fill="#6f6f6f"/><path d="M2 3.200h1.500v1.600H2zM4.500 3.200v1.600M4.500 4l1.300-.8M4.500 4l1.300.8" stroke="#e8e8e8" stroke-width=".55" fill="none"/></svg><span class="t" style="left:64px;top:15.20px">Button</span><svg style="left:54.7px;top:24.96px" width="7.4" height="7.4" viewBox="0 0 8 8"><rect x=".5" y=".5" width="7" height="7" fill="#e8316b"/><path d="M1.500 6.500L5.500 1.500h1v5z" fill="#fff"/></svg><span class="t" style="left:64px;top:24.46px">ToggleButton</span><svg style="left:54.7px;top:34.22px" width="7.4" height="7.4" viewBox="0 0 8 8"><rect x=".7" y=".7" width="6.600" height="6.600" fill="#bdbdbd" stroke="#9a9a9a" stroke-width=".5"/><path d="M2 4l1.500 1.500 3-3.500" stroke="#fff" stroke-width=".9" fill="none"/></svg><span class="t" style="left:64px;top:33.72px">CheckBox</span><svg style="left:54.7px;top:43.48px" width="7.4" height="7.4" viewBox="0 0 8 8"><circle cx="4" cy="4" r="2.900" fill="none" stroke="#e8316b" stroke-width="1"/><circle cx="4" cy="4" r="1.300" fill="#e8316b"/></svg><span class="t" style="left:64px;top:42.98px">RadioButton</span><svg style="left:54.7px;top:52.74px" width="7.4" height="7.4" viewBox="0 0 8 8"><path d="M1.800 4.500l1.700 2 3.700-3.300" stroke="#e8316b" stroke-width="1.400" fill="none"/><path d="M.8 2.200h1.500M1.600 1v2.300" stroke="#777" stroke-width=".5"/></svg><span class="t" style="left:64px;top:52.24px">CheckedTextView</span><svg style="left:54.7px;top:62.0px" width="7.4" height="7.4" viewBox="0 0 8 8"><path d="M.8 3h6M.8 5.200h6M.8 7.300h6" stroke="#e8316b" stroke-width="1.100"/><path d="M5.200 1.700L6.500.3l1.300 1.400z" fill="#e8316b"/></svg><span class="t" style="left:64px;top:61.50px">Spinner</span><svg style="left:54.7px;top:71.26px" width="7.4" height="7.4" viewBox="0 0 8 8"><path d="M2.300 6.800A3 3 0 1 1 6.900 4.600" fill="none" stroke="#e8316b" stroke-width="1.800"/></svg><span class="t" style="left:64px;top:70.76px">ProgressBar</span><svg style="left:54.7px;top:80.52px" width="7.4" height="7.4" viewBox="0 0 8 8"><rect x=".8" y="3.300" width="5.500" height="1.600" fill="#e8316b"/></svg><span class="t" style="left:64px;top:80.02px">ProgressBar (Horizontal)</span><svg style="left:54.7px;top:89.78px" width="7.4" height="7.4" viewBox="0 0 8 8"><path d="M.5 4h7" stroke="#e8316b" stroke-width=".8"/><circle cx="4.500" cy="4" r="1.500" fill="#e8316b"/></svg><span class="t" style="left:64px;top:89.28px">SeekBar</span><svg style="left:54.7px;top:99.04px" width="7.4" height="7.4" viewBox="0 0 8 8"><path d="M.5 6.500h7" stroke="#e8316b" stroke-width=".8"/><path d="M4 1a1.500 1.500 0 0 1 1.500 1.500c0 1-1.500 2.700-1.500 2.700S2.500 3.500 2.500 2.500A1.500 1.500 0 0 1 4 1z" fill="#e8316b"/></svg><span class="t" style="left:64px;top:98.54px">SeekBar (Discrete)</span><svg style="left:54.7px;top:108.3px" width="7.4" height="7.4" viewBox="0 0 8 8"><rect x=".5" y=".5" width="7" height="7" rx=".8" fill="#e8316b"/><circle cx="4" cy="3" r="1.300" fill="#fff"/><path d="M1.500 6.800c0-1.600 1.200-2 2.500-2s2.500.4 2.500 2z" fill="#fff"/></svg><span class="t" style="left:64px;top:107.80px">QuickContactBadge</span><svg style="left:54.7px;top:117.56px" width="7.4" height="7.4" viewBox="0 0 8 8"><path d="M4 .8l1 2.200 2.400.2-1.800 1.600.6 2.400L4 5.900 1.800 7.200l.6-2.400L.6 3.200 3 3z" fill="#c4c4c4"/></svg><span class="t" style="left:64px;top:117.06px">RatingBar</span><svg style="left:54.7px;top:126.82px" width="7.4" height="7.4" viewBox="0 0 8 8"><path d="M1 4h3" stroke="#f3a0bb" stroke-width="1.600" stroke-linecap="round"/><circle cx="5" cy="4" r="1.600" fill="#e8316b"/></svg><span class="t" style="left:64px;top:126.32px">Switch</span><svg style="left:54.7px;top:136.08px" width="7.4" height="7.4" viewBox="0 0 8 8"><path d="M.6 0v8M7.400 0v8" stroke="#e8316b" stroke-width="1"/><path d="M1 4h6" stroke="#e8316b" stroke-width=".6"/></svg><span class="t" style="left:64px;top:135.58px">Space</span><div style="left:52px;top:147px;width:112px;height:1px;background:#e2e2e2"></div><svg style="left:54.7px;top:151.4px" width="7.4" height="7.4" viewBox="0 0 8 8"><text x="0" y="6" font-family="Liberation Sans,sans-serif" font-size="4.800" font-weight="bold" fill="#777">Ab</text></svg><span class="t" style="left:64px;top:150.90px">TextView</span><svg style="left:54.7px;top:160.64px" width="7.4" height="7.4" viewBox="0 0 8 8"><rect x=".5" y="1.500" width="7" height="5" fill="#eee" stroke="#aaa" stroke-width=".5"/><text x="1" y="5" font-family="Liberation Sans,sans-serif" font-size="3" fill="#666">abc</text><path d="M1 5.800h6" stroke="#777" stroke-width=".5"/></svg><span class="t" style="left:64px;top:160.14px">Plain Text</span><svg style="left:54.7px;top:169.88px" width="7.4" height="7.4" viewBox="0 0 8 8"><rect x="2.300" y="3.800" width="3.600" height="3" fill="#444"/><path d="M3.100 3.800V3a1 1 0 0 1 2 0v.8" fill="none" stroke="#444" stroke-width=".7"/></svg><span class="t" style="left:64px;top:169.38px">Password</span><svg style="left:54.7px;top:179.12px" width="7.4" height="7.4" viewBox="0 0 8 8"><rect x="3" y="3.800" width="3.600" height="3" fill="#444"/><path d="M3.800 3.800V3a1 1 0 0 1 2 0v.8" fill="none" stroke="#444" stroke-width=".7"/><text x=".8" y="3.800" font-family="Liberation Sans,sans-serif" font-size="3" font-weight="bold" fill="#555">1</text></svg><span class="t" style="left:64px;top:178.62px">Password (Numeric)</span><svg style="left:54.7px;top:188.36px" width="7.4" height="7.4" viewBox="0 0 8 8"><circle cx="4" cy="4.200" r="2.600" fill="#c9c9c9"/><circle cx="4" cy="4.200" r="1" fill="none" stroke="#fff" stroke-width=".6"/></svg><span class="t" style="left:64px;top:187.86px">E-mail</span><svg style="left:54.7px;top:197.6px" width="7.4" height="7.4" viewBox="0 0 8 8"><text x="2.300" y="6.300" font-family="Liberation Sans,sans-serif" font-size="5" font-weight="bold" fill="#555">#</text></svg><span class="t" style="left:64px;top:197.10px">Phone</span><svg style="left:54.7px;top:206.84px" width="7.4" height="7.4" viewBox="0 0 8 8"><path d="M4 1.500L1 4.200h.9v2.800h1.600V5.300h1v1.700h1.600V4.200H7z" fill="#333"/></svg><span class="t" style="left:64px;top:206.34px">Postal Address</span><svg style="left:54.7px;top:216.08px" width="7.4" height="7.4" viewBox="0 0 8 8"><path d="M2 2h5M2 3.800h5M2 5.600h5M2 7.200h3.500" stroke="#555" stroke-width=".7"/><path d="M1.200 1.200v6.500" stroke="#333" stroke-width=".8"/></svg><span class="t" style="left:64px;top:215.58px">Multiline Text</span><div style="left:0;top:225.500px;width:164px;height:5px;background:#e6e6e6"></div><div style="left:79px;top:227.500px;width:8px;height:1px;background:#cfcfcf"></div></div>
<div id="ctree"><div class="ph"><span class="s" style="left:3px;top:1.500px;font-size:5.900px;color:#222">Component Tree</span><svg style="left:140px;top:3.4px" width="6.2" height="6.2" viewBox="0 0 7 7"><circle cx="3.500" cy="3.500" r="2" fill="none" stroke="#555" stroke-width="1.400"/><path d="M3.500 0v7M0 3.500h7M1 1l5 5M6 1L1 6" stroke="#555" stroke-width=".9"/><circle cx="3.500" cy="3.500" r="1" fill="#ececec"/></svg><svg style="left:147.3px;top:5.8px" width="2.6" height="1.7" viewBox="0 0 2.6 1.7"><path d="M0 0H2.6L1.3 1.7z" fill="#444"/></svg><svg style="left:154px;top:3px" width="7" height="7" viewBox="0 0 7 7"><path d="M1 0v7" stroke="#555" stroke-width="1"/><path d="M2.500 3h3.500" stroke="#555" stroke-width=".9"/><path d="M2.300 3l1.500-1.200v2.400z" fill="#555"/></svg></div><div class="row" style="top:14.64px;width:165px"><svg style="left:3.7px;top:3.3px" width="4.600" height="3.400" viewBox="0 0 4.600 3.400"><path d="M0 0H4.600L2.300 3.400z" fill="#8a8a8a"/></svg><svg style="left:14.5px;top:1.5px" width="7" height="7" viewBox="0 0 7 7"><path d="M.9 .2v6.600M3.200 .2v6.600M5.500 .2v6.600" stroke="#2a2a2a" stroke-width="1.500"/></svg><span class="t" style="left:24.7px">LinearLayout<span style="position:static;color:#999"> (horizontal)</span></span></div><div class="row" style="top:24.36px;width:165px"><svg style="left:13.7px;top:3.3px" width="4.600" height="3.400" viewBox="0 0 4.600 3.400"><path d="M0 0H4.600L2.300 3.400z" fill="#8a8a8a"/></svg><svg style="left:25.5px;top:1.6px" width="6.5" height="6.5" viewBox="0 0 6.500 6.500"><rect x=".3" y=".3" width="5.900" height="5.900" fill="#fafafa"/><path d="M.3 1.800L1.800.3M.3 3.400L3.400.3M.3 5L5 .3M.6 6.200L6.200.6M2.200 6.200l4-4M3.800 6.200l2.400-2.400M5.400 6.200l.8-.8" stroke="#333" stroke-width=".6"/></svg><span class="t" style="left:34.7px">ConstraintLayout</span></div><div class="row" style="top:34.08px;width:165px"><svg style="left:35.5px;top:1.6px" width="6.5" height="6.5" viewBox="0 0 6.500 6.500"><rect x=".3" y=".3" width="5.900" height="5.900" fill="#fafafa"/><path d="M.3 1.800L1.800.3M.3 3.400L3.400.3M.3 5L5 .3M.6 6.200L6.200.6M2.200 6.200l4-4M3.800 6.200l2.400-2.400M5.400 6.200l.8-.8" stroke="#333" stroke-width=".6"/></svg><span class="t b" style="left:44.7px;font-size:6.950px">artwork_profile_container_0_guidell</span></div><div class="row" style="top:43.80px;width:165px"><svg style="left:35.5px;top:1.6px" width="6.5" height="6.5" viewBox="0 0 6.500 6.500"><rect x=".3" y=".3" width="5.900" height="5.900" fill="#fafafa"/><path d="M.3 1.800L1.800.3M.3 3.400L3.400.3M.3 5L5 .3M.6 6.200L6.200.6M2.200 6.200l4-4M3.800 6.200l2.400-2.400M5.400 6.200l.8-.8" stroke="#333" stroke-width=".6"/></svg><span class="t b" style="left:44.7px;font-size:6.950px">artwork_profile_container_0_guidell</span></div><div class="row" style="top:53.52px;width:165px"><svg style="left:35.5px;top:1.6px" width="6.5" height="6.5" viewBox="0 0 6.500 6.500"><rect x=".3" y=".3" width="5.900" height="5.900" fill="#fafafa"/><path d="M.3 1.800L1.800.3M.3 3.400L3.400.3M.3 5L5 .3M.6 6.200L6.200.6M2.200 6.200l4-4M3.800 6.200l2.400-2.400M5.400 6.200l.8-.8" stroke="#333" stroke-width=".6"/></svg><span class="t b" style="left:44.7px;font-size:6.950px">artwork_profile_container_0_guidell</span></div><div class="row" style="top:63.24px;width:165px"><svg style="left:35.5px;top:1.6px" width="6.5" height="6.5" viewBox="0 0 6.500 6.500"><rect x=".3" y=".3" width="5.900" height="5.900" fill="#fafafa"/><path d="M.3 1.800L1.800.3M.3 3.400L3.400.3M.3 5L5 .3M.6 6.200L6.200.6M2.200 6.200l4-4M3.800 6.200l2.400-2.400M5.400 6.200l.8-.8" stroke="#333" stroke-width=".6"/></svg><span class="t b" style="left:44.7px;font-size:6.950px">artwork_profile_container_0_guidell</span></div><div class="row" style="top:72.96px;width:165px"><svg style="left:23.7px;top:3.3px" width="4.600" height="3.400" viewBox="0 0 4.600 3.400"><path d="M0 0H4.600L2.300 3.400z" fill="#8a8a8a"/></svg><svg style="left:35.5px;top:1.6px" width="6.5" height="6.5" viewBox="0 0 6.500 6.500"><rect x=".3" y=".3" width="5.900" height="5.900" fill="#fafafa"/><path d="M.3 1.800L1.800.3M.3 3.400L3.400.3M.3 5L5 .3M.6 6.200L6.200.6M2.200 6.200l4-4M3.800 6.200l2.400-2.400M5.400 6.200l.8-.8" stroke="#333" stroke-width=".6"/></svg><span class="t b" style="left:44.7px;font-size:6.950px">artwork_profile_container_0_93beb</span></div><div class="row" style="top:82.68px;width:165px"><svg style="left:45.7px;top:1.6px" width="6.5" height="6.5" viewBox="0 0 6.500 6.500"><rect x=".3" y=".3" width="5.900" height="5.900" fill="#fafafa"/><path d="M.3 1.800L1.800.3M.3 3.400L3.400.3M.3 5L5 .3M.6 6.200L6.200.6M2.200 6.200l4-4M3.800 6.200l2.400-2.400M5.400 6.200l.8-.8" stroke="#333" stroke-width=".6"/></svg><span class="t b" style="left:54.900000000000006px;font-size:6.950px">artwork_profile_container_0_row</span></div><div class="row" style="top:92.40px;width:165px"><svg style="left:45.7px;top:1.6px" width="6.5" height="6.5" viewBox="0 0 6.500 6.500"><rect x=".3" y=".3" width="5.900" height="5.900" fill="#fafafa"/><path d="M.3 1.800L1.800.3M.3 3.400L3.400.3M.3 5L5 .3M.6 6.200L6.200.6M2.200 6.200l4-4M3.800 6.200l2.400-2.400M5.400 6.200l.8-.8" stroke="#333" stroke-width=".6"/></svg><span class="t b" style="left:54.900000000000006px;font-size:6.950px">artwork_profile_container_0_row</span></div><div class="row" style="top:102.12px;width:165px"><svg style="left:45.7px;top:1.6px" width="6.5" height="6.5" viewBox="0 0 6.500 6.500"><rect x=".3" y=".3" width="5.900" height="5.900" fill="#fafafa"/><path d="M.3 1.800L1.800.3M.3 3.400L3.400.3M.3 5L5 .3M.6 6.200L6.200.6M2.200 6.200l4-4M3.800 6.200l2.400-2.400M5.400 6.200l.8-.8" stroke="#333" stroke-width=".6"/></svg><span class="t b" style="left:54.900000000000006px;font-size:6.950px">artwork_profile_container_0_row</span></div><div class="row" style="top:111.84px;width:165px"><svg style="left:45.7px;top:1.6px" width="6.5" height="6.5" viewBox="0 0 6.500 6.500"><rect x=".3" y=".3" width="5.900" height="5.900" fill="#fafafa"/><path d="M.3 1.800L1.800.3M.3 3.400L3.400.3M.3 5L5 .3M.6 6.200L6.200.6M2.200 6.200l4-4M3.800 6.200l2.400-2.400M5.400 6.200l.8-.8" stroke="#333" stroke-width=".6"/></svg><span class="t b" style="left:54.900000000000006px;font-size:6.950px">artwork_profile_container_0_row</span></div><div class="row" style="top:121.56px;width:165px"><svg style="left:33.900000000000006px;top:3.3px" width="4.600" height="3.400" viewBox="0 0 4.600 3.400"><path d="M0 0H4.600L2.300 3.400z" fill="#8a8a8a"/></svg><svg style="left:45.7px;top:1.6px" width="6.5" height="6.5" viewBox="0 0 6.500 6.500"><rect x=".3" y=".3" width="5.900" height="5.900" fill="#fafafa"/><path d="M.3 1.800L1.800.3M.3 3.400L3.400.3M.3 5L5 .3M.6 6.200L6.200.6M2.200 6.200l4-4M3.800 6.200l2.400-2.400M5.400 6.200l.8-.8" stroke="#333" stroke-width=".6"/></svg><span class="t b" style="left:54.900000000000006px;font-size:6.950px">artwork_profile_container_0_row</span></div><div class="row" style="top:131.28px;width:165px"><svg style="left:55.7px;top:1.6px" width="6.5" height="6.5" viewBox="0 0 6.500 6.500"><rect x=".3" y=".3" width="5.900" height="5.900" fill="#fafafa"/><path d="M.3 1.800L1.800.3M.3 3.400L3.400.3M.3 5L5 .3M.6 6.200L6.200.6M2.200 6.200l4-4M3.800 6.200l2.400-2.400M5.400 6.200l.8-.8" stroke="#333" stroke-width=".6"/></svg><span class="t b" style="left:64.9px;font-size:6.950px">artwork_profile_container_0_c</span></div><div class="row" style="top:141.00px;width:165px"><svg style="left:55.7px;top:1.6px" width="6.5" height="6.5" viewBox="0 0 6.500 6.500"><rect x=".3" y=".3" width="5.900" height="5.900" fill="#fafafa"/><path d="M.3 1.800L1.800.3M.3 3.400L3.400.3M.3 5L5 .3M.6 6.200L6.200.6M2.200 6.200l4-4M3.800 6.200l2.400-2.400M5.400 6.200l.8-.8" stroke="#333" stroke-width=".6"/></svg><span class="t b" style="left:64.9px;font-size:6.950px">artwork_profile_container_0_c</span></div><div class="row" style="top:150.72px;width:165px"><svg style="left:55.7px;top:1.6px" width="6.5" height="6.5" viewBox="0 0 6.500 6.500"><rect x=".3" y=".3" width="5.900" height="5.900" fill="#fafafa"/><path d="M.3 1.800L1.800.3M.3 3.400L3.400.3M.3 5L5 .3M.6 6.200L6.200.6M2.200 6.200l4-4M3.800 6.200l2.400-2.400M5.400 6.200l.8-.8" stroke="#333" stroke-width=".6"/></svg><span class="t b" style="left:64.9px;font-size:6.950px">artwork_profile_container_0_c</span></div><div class="row" style="top:160.44px;width:165px"><svg style="left:55.7px;top:1.6px" width="6.5" height="6.5" viewBox="0 0 6.500 6.500"><rect x=".3" y=".3" width="5.900" height="5.900" fill="#fafafa"/><path d="M.3 1.800L1.800.3M.3 3.400L3.400.3M.3 5L5 .3M.6 6.200L6.200.6M2.200 6.200l4-4M3.800 6.200l2.400-2.400M5.400 6.200l.8-.8" stroke="#333" stroke-width=".6"/></svg><span class="t b" style="left:64.9px;font-size:6.950px">artwork_profile_container_0_c</span></div><div class="row" style="top:170.16px;width:165px"><svg style="left:55.7px;top:1.6px" width="6.5" height="6.5" viewBox="0 0 6.500 6.500"><rect x=".3" y=".3" width="5.900" height="5.900" fill="#fafafa"/><path d="M.3 1.800L1.800.3M.3 3.400L3.400.3M.3 5L5 .3M.6 6.200L6.200.6M2.200 6.200l4-4M3.800 6.200l2.400-2.400M5.400 6.200l.8-.8" stroke="#333" stroke-width=".6"/></svg><span class="t b" style="left:64.9px;font-size:6.950px">artwork_profile_container_0_c</span></div><div class="row" style="top:179.88px;width:165px"><svg style="left:55.7px;top:1.6px" width="6.5" height="6.5" viewBox="0 0 6.500 6.500"><rect x=".3" y=".3" width="5.900" height="5.900" fill="#fafafa"/><path d="M.3 1.800L1.800.3M.3 3.400L3.400.3M.3 5L5 .3M.6 6.200L6.200.6M2.200 6.200l4-4M3.800 6.200l2.400-2.400M5.400 6.200l.8-.8" stroke="#333" stroke-width=".6"/></svg><span class="t b" style="left:64.9px;font-size:6.950px">artwork_profile_container_0_c</span></div><div class="row" style="top:189.60px;width:165px"><svg style="left:55.7px;top:1.6px" width="6.5" height="6.5" viewBox="0 0 6.500 6.500"><rect x=".3" y=".3" width="5.900" height="5.900" fill="#fafafa"/><path d="M.3 1.800L1.800.3M.3 3.400L3.400.3M.3 5L5 .3M.6 6.200L6.200.6M2.200 6.200l4-4M3.800 6.200l2.400-2.400M5.400 6.200l.8-.8" stroke="#333" stroke-width=".6"/></svg><span class="t b" style="left:64.9px;font-size:6.950px">artwork_profile_container_0_c</span></div><div class="row" style="top:199.32px;width:165px"><svg style="left:55.7px;top:1.6px" width="6.5" height="6.5" viewBox="0 0 6.500 6.500"><rect x=".3" y=".3" width="5.900" height="5.900" fill="#fafafa"/><path d="M.3 1.800L1.800.3M.3 3.400L3.400.3M.3 5L5 .3M.6 6.200L6.200.6M2.200 6.200l4-4M3.800 6.200l2.400-2.400M5.400 6.200l.8-.8" stroke="#333" stroke-width=".6"/></svg><span class="t b" style="left:64.9px;font-size:6.950px">artwork_profile_container_0_c</span></div><div class="row" style="top:209.04px;width:165px"><svg style="left:55.7px;top:1.6px" width="6.5" height="6.5" viewBox="0 0 6.500 6.500"><rect x=".3" y=".3" width="5.900" height="5.900" fill="#fafafa"/><path d="M.3 1.800L1.800.3M.3 3.400L3.400.3M.3 5L5 .3M.6 6.200L6.200.6M2.200 6.200l4-4M3.800 6.200l2.400-2.400M5.400 6.200l.8-.8" stroke="#333" stroke-width=".6"/></svg><span class="t b" style="left:64.9px;font-size:6.950px">artwork_profile_container_0_c</span></div><div class="row" style="top:218.76px;width:165px"><span style="left:54.2px;top:0;font-size:5.500px;line-height:10px;color:#555">Ab</span><span class="t b" style="left:64.9px;font-size:6.950px">artwork_profile_container_0_c</span></div></div>
<div style="left:166px;top:518.500px;width:794px;height:14.500px;background:#e9e9e9;border-top:1px solid #fafafa;z-index:3"></div><div style="left:166px;top:518.500px;width:165px;height:1px;background:#d4d4d4;z-index:3"></div><div style="left:171px;top:518.500px;width:27px;height:14.500px;background:#fff;z-index:3"></div><span class="s" style="left:176px;top:520.700px;font-size:6px;color:#222;z-index:4">Design</span><div style="left:198px;top:519.500px;width:26px;height:13.500px;background:#d0d0d0;z-index:3"></div><span class="s" style="left:206px;top:520.700px;font-size:6px;color:#333;z-index:4">Text</span><div id="design"><div style="left:0;top:.7px;width:629px;height:30px"><div style="left:0;top:-1px;width:629px;height:16px;background:#f0f0f0;border-bottom:1px solid #d2d2d2"></div><div style="left:0;top:15px;width:629px;height:14.800px;background:#ebebeb;border-bottom:1px solid #d2d2d2"></div><svg style="left:2px;top:3px" width="9" height="9" viewBox="0 0 9 9"><path d="M.5 3L4.500.8 8.500 3 4.500 5.200z" fill="#2f8be0"/><path d="M.5 4.800L4.500 7 8.500 4.800M.5 6.300l4 2.200 4-2.200" fill="none" stroke="#2f8be0" stroke-width="1"/></svg><svg style="left:14px;top:6.9px" width="3.6" height="2.3" viewBox="0 0 3.6 2.3"><path d="M0 0H3.6L1.8 2.3z" fill="#333"/></svg><div class="sep" style="left:21.500px;top:2.500px;height:10px"></div><svg style="left:26.5px;top:3.5px" width="8" height="8" viewBox="0 0 8 8"><circle cx="4" cy="4" r="3.300" fill="none" stroke="#666" stroke-width=".8"/><rect x="2.300" y="1.800" width="3.400" height="4.400" fill="none" stroke="#666" stroke-width=".7" transform="rotate(-35 4 4)"/></svg><svg style="left:38px;top:6.9px" width="3.6" height="2.3" viewBox="0 0 3.6 2.3"><path d="M0 0H3.6L1.8 2.3z" fill="#333"/></svg><div class="sep" style="left:47px;top:2.500px;height:10px"></div><svg style="left:52px;top:3px" width="5" height="9" viewBox="0 0 5 9"><rect x=".5" y=".5" width="4" height="8" rx=".7" fill="#fff" stroke="#555" stroke-width=".9"/></svg><span class="t" style="left:60.500px;top:2.600px">Nexus 4</span><svg style="left:90.5px;top:6.9px" width="3.6" height="2.3" viewBox="0 0 3.6 2.3"><path d="M0 0H3.6L1.8 2.3z" fill="#333"/></svg><div style="left:99px;top:5.500px;width:6.500px;height:4.500px;background:#9ccc45;border-radius:2px 2px 0 0"></div><span class="t" style="left:109.500px;top:2.600px">27</span><svg style="left:121.5px;top:6.9px" width="3.6" height="2.3" viewBox="0 0 3.6 2.3"><path d="M0 0H3.6L1.8 2.3z" fill="#333"/></svg><svg style="left:129px;top:3.5px" width="8" height="8" viewBox="0 0 8 8"><circle cx="4" cy="4" r="3.300" fill="none" stroke="#555" stroke-width=".8"/><path d="M5.300 2.800A1.800 1.800 0 1 0 5.300 5.200" fill="none" stroke="#555" stroke-width=".9"/></svg><span class="t" style="left:139px;top:2.600px">AppTheme</span><div class="sep" style="left:177.500px;top:2.500px;height:10px"></div><svg style="left:181.5px;top:3.5px" width="8" height="8" viewBox="0 0 8 8"><circle cx="4" cy="4" r="3.300" fill="none" stroke="#444" stroke-width=".8"/><path d="M2 2c1.500.5 1 2 2.500 2s.5 2 1.500 2.500" fill="none" stroke="#444" stroke-width=".9"/></svg><span class="t" style="left:191.500px;top:2.600px">Language</span><svg style="left:225.5px;top:6.9px" width="3.6" height="2.3" viewBox="0 0 3.6 2.3"><path d="M0 0H3.6L1.8 2.3z" fill="#333"/></svg><svg style="left:2.5px;top:18.5px" width="8" height="7" viewBox="0 0 8 7"><path d="M0 1h8M0 3.500h8M0 6h8" stroke="#333" stroke-width="1.500"/></svg><div class="sep" style="left:14px;top:17.500px;height:10px"></div><svg style="left:18.5px;top:19.5px" width="8" height="5" viewBox="0 0 8 5"><path d="M1 2.500h6M2.200 1L.6 2.500 2.200 4M5.800 1l1.600 1.500L5.800 4" fill="none" stroke="#c2c2c2" stroke-width=".7"/></svg><svg style="left:33px;top:18px" width="5" height="8" viewBox="0 0 5 8"><path d="M2.500 1v6M1 2.200L2.500.6 4 2.200M1 5.800l1.500 1.600L4 5.800" fill="none" stroke="#c2c2c2" stroke-width=".7"/></svg><svg style="left:546.5px;top:18.5px" width="7" height="7" viewBox="0 0 7 7"><circle cx="3.500" cy="3.500" r="3" fill="none" stroke="#555" stroke-width=".7"/><path d="M1.800 3.500h3.400" stroke="#555" stroke-width=".8"/></svg><span class="t b" style="left:557.300px;top:17.200px;font-size:6.600px;color:#333">54%</span><svg style="left:574.5px;top:18.5px" width="7" height="7" viewBox="0 0 7 7"><circle cx="3.500" cy="3.500" r="3" fill="none" stroke="#555" stroke-width=".7"/><path d="M1.800 3.500h3.400M3.500 1.800v3.400" stroke="#555" stroke-width=".8"/></svg><svg style="left:587.5px;top:18.5px" width="7" height="7" viewBox="0 0 7 7"><rect x=".4" y=".4" width="6.200" height="6.200" fill="none" stroke="#555" stroke-width=".7"/><path d="M1.500 5.500l4-4M3.800 1.500h1.700v1.700" fill="none" stroke="#555" stroke-width=".6"/></svg><svg style="left:600px;top:18px" width="7" height="8" viewBox="0 0 7 8"><path d="M1.500 7.500L.8 4.500l1-.3.700 1.300V1.500h1V1h1v.5h1V2h1v3.500l-.8 2z" fill="#555"/></svg><div class="sep" style="left:609.500px;top:17.500px;height:10px"></div><div style="left:616.500px;top:18.500px;width:7px;height:7px;border-radius:50%;background:#555"></div><span style="left:619px;top:17.300px;font-size:5.500px;line-height:9px;color:#eee;font-weight:bold">!</span></div><div style="left:622.500px;top:30.500px;width:5.500px;height:426px;background:#f6f6f6"></div><div style="left:97.7px;top:66.2px;width:213.3px;height:356.7px;background:#fff"></div><div style="left:97.7px;top:66.2px;width:213.3px;height:13.5px;background:#2f3e9d"></div><div style="left:97.7px;top:79.7px;width:213.3px;height:31.7px;background:#3d4fb3"></div><span style="left:106.60000000000002px;top:89px;font-size:11.200px;line-height:14px;color:#fff">App</span><span style="left:291.20000000000005px;top:69.5px;font-size:8.700px;line-height:10px;color:#fff">8:00</span><svg style="left:268.5px;top:69px" width="21" height="10" viewBox="0 0 21 10"><path d="M.3 1.800Q5.500-.8 10.700 1.800L5.500 8.800z" fill="#fff"/><path d="M13.300 1.500h1.600V.5h3v1h1.600V9h-6.200z" fill="#fff"/></svg><svg style="left:97.69999999999999px;top:111.4px" width="213.300" height="160" viewBox="428.700 173.400 213.300 160"><defs><pattern id="g1" x="469" y="178.900" width="18.900" height="18.900" patternUnits="userSpaceOnUse"><path d="M0 0h18.900M0 0v18.900" stroke="#8ed5c8" stroke-width="1" fill="none"/></pattern><pattern id="g2" x="456" y="227" width="3.300" height="3.300" patternUnits="userSpaceOnUse"><path d="M0 0h3.300M0 0v3.300" stroke="#55b5a4" stroke-width=".4" fill="none"/></pattern></defs><rect x="428.700" y="278.900" width="107.200" height="50" fill="#41b4ff"/><rect x="535.900" y="278.900" width="106.100" height="50" fill="#ff70e0"/><rect x="466.700" y="173.400" width="137" height="121" fill="#279e8b"/><rect x="466.700" y="173.400" width="137" height="121" fill="url(#g1)"/><path d="M500 246l70 0 34 34v14h-56z" fill="#1f8b7a" opacity=".55"/><path d="M496.700 244.900a40.100 40.100 0 0 1 80.200 0z" fill="#fff"/><path d="M506.400 201.600l7.500 9M567.200 201.600l-7.500 9" stroke="#fff" stroke-width="7.200" stroke-linecap="round"/><circle cx="518.400" cy="227.400" r="3.500" fill="#279e8b"/><circle cx="552.500" cy="227.400" r="3.500" fill="#279e8b"/><text x="516" y="253.300" font-family="Liberation Sans,sans-serif" font-size="4.300" fill="#4fb3ea">YOUR Designer</text><circle cx="470.600" cy="242.300" r="27.100" fill="#fff"/><rect x="456" y="227" width="29.800" height="29.800" fill="#279e8b"/><rect x="456" y="227" width="29.800" height="29.800" fill="url(#g2)"/><path d="M461.800 245.800a9.050 8.700 0 0 1 18.100 0z" fill="#fff"/><path d="M463.800 235.600l2.200 2.800M478 235.600l-2.200 2.800" stroke="#fff" stroke-width="1.300" stroke-linecap="round"/><circle cx="466.700" cy="242" r=".8" fill="#279e8b"/><circle cx="475" cy="242" r=".8" fill="#279e8b"/><circle cx="535.800" cy="279" r="17.600" fill="#fff"/><text x="482.600" y="305.300" text-anchor="middle" font-family="Liberation Sans,sans-serif" font-size="13.600" fill="#fff" stroke="#41b4ff" stroke-width=".3">12</text><text x="589.300" y="305.300" text-anchor="middle" font-family="Liberation Sans,sans-serif" font-size="13.600" fill="#fff" stroke="#ff70e0" stroke-width=".3">32</text><text x="482.200" y="314" text-anchor="middle" font-family="Liberation Sans,sans-serif" font-size="5" fill="#fff" opacity=".9">remaining tasks</text><text x="582.600" y="314" text-anchor="middle" font-family="Liberation Sans,sans-serif" font-size="5" fill="#fff" opacity=".9">completed tasks</text></svg><span style="left:110px;top:283px;font-size:4.800px;line-height:10px;letter-spacing:.45px;color:#74879a;font-weight:bold">TODAY</span><div style="left:109.8px;top:302.1px;width:8.1px;height:5.2px;background:#cf85ea;border-radius:2.600px"></div><div style="left:144.2px;top:301.5px;width:110px;height:6.700px;overflow:hidden"><span style="left:0;top:0;font-size:7.300px;line-height:10px;color:#38434f">Finish landing page concept</span></div><div style="left:254.3px;top:303.2px;width:8.3px;height:3.7px;background:#2b3a4a"></div><div style="left:109.8px;top:324.7px;width:8.1px;height:5.2px;background:#43dc96;border-radius:2.600px"></div><div style="left:141.3px;top:324.5px;width:110px;height:6.700px;overflow:hidden"><span style="left:0;top:0;font-size:7.300px;line-height:10px;color:#38434f">Design app illustrations</span></div><div style="left:234.8px;top:326.1px;width:8.3px;height:3.7px;background:#2b3a4a"></div><div style="left:109.8px;top:348.6px;width:8.1px;height:5.2px;background:#42b3ff;border-radius:2.600px"></div><div style="left:138px;top:347.5px;width:110px;height:6.700px;overflow:hidden"><span style="left:0;top:0;font-size:7.300px;line-height:10px;color:#38434f">Javascript training</span></div><div style="left:214.2px;top:349.5px;width:8.3px;height:3.7px;background:#2b3a4a"></div><div style="left:109.8px;top:371.9px;width:8.1px;height:5.2px;background:#ffb152;border-radius:2.600px"></div><div style="left:140.3px;top:371.5px;width:110px;height:6.700px;overflow:hidden"><span style="left:0;top:0;font-size:7.300px;line-height:10px;color:#38434f">Surprise Party for Matt</span></div><div style="left:231.8px;top:373.4px;width:8.3px;height:3.7px;background:#2b3a4a"></div><div style="left:97.7px;top:395.7px;width:213.3px;height:27.2px;background:#000"></div><svg style="left:97.69999999999999px;top:395.7px" width="213.300" height="26.700" viewBox="428.700 457.700 213.300 26.700"><path d="M466 466.300v9.400l-8-4.700z" fill="none" stroke="#fff" stroke-width="1.100" stroke-linejoin="round"/><circle cx="535.500" cy="471" r="4.300" fill="none" stroke="#fff" stroke-width="1.100"/><rect x="604.600" y="467" width="8" height="8" fill="none" stroke="#fff" stroke-width="1.100"/></svg><svg style="left:313px;top:425px" width="9" height="9" viewBox="0 0 9 9"><path d="M1 8L8 1M4 8L8 4" stroke="#888" stroke-width=".7"/></svg><svg style="left:316.5px;top:66.19999999999999px" width="213.500" height="356.600" viewBox="647.500 128.200 213.500 356.600"><defs><pattern id="ht" width="1.600" height="1.600" patternUnits="userSpaceOnUse"><rect width=".8" height=".8" fill="#6f9fd6" opacity=".55"/><rect x=".8" y=".8" width=".8" height=".8" fill="#6f9fd6" opacity=".55"/></pattern></defs><rect x="647.500" y="128.200" width="213.500" height="356.600" fill="#23496c"/><rect x="647.500" y="173.400" width="213.500" height="155.600" fill="#27557f"/><path d="M649 251.400L664.800 231.600 681.300 204.700 685.500 201.800 688.300 204.700 695.800 197.700 716.400 174.500 718.500 173.400H751.600L759.800 175.800 776.400 194.400 797 210 813.600 219.200 821.800 221.200 826 218.300 832 221.200 846.600 239.800 857.800 256.400L857.800 278.300H649z" fill="#255079"/><path d="M649 251.400L664.800 231.600 681.300 204.700 685.500 201.800 688.300 204.700 695.800 197.700 716.400 174.500 718.500 173.400H751.600L759.800 175.800 776.400 194.400 797 210 813.600 219.200 821.800 221.200 826 218.300 832 221.200 846.600 239.800 857.800 256.400" fill="none" stroke="#8fb0d2" stroke-width=".9"/><g fill="none" stroke="#6496cf" stroke-width=".8"><path d="M647.500 173.600H861M648.300 173.600V329.500M859.600 173.600V329.500M647.500 278.300H861M647.500 294.800H861M647.500 329H861M753.800 294.800V329M647.500 457.700H861"/><rect x="661" y="215.300" width="55.400" height="54.300"/><rect x="716.400" y="215.300" width="59" height="54.300"/><rect x="669.800" y="226.600" width="40.400" height="29.800"/><rect x="727.600" y="229.500" width="47.800" height="13.500"/><rect x="690.800" y="289.400" width="19.400" height="18.800"/><rect x="797.500" y="289.400" width="21" height="18.800"/><rect x="676.400" y="308.400" width="50.400" height="7" fill="url(#ht)"/><rect x="781.700" y="308.400" width="53.300" height="7" fill="url(#ht)"/><rect x="659.200" y="344.800" width="24.700" height="8.600" fill="#3a6da3" fill-opacity=".6"/><rect x="659.200" y="363" width="153.4" height="7.2" rx="1" fill="#3f74ad" fill-opacity=".6" stroke="#6da0d8" stroke-width=".9"/><rect x="660" y="363.9" width="18.700" height="5.4" fill="#244b70" stroke="none"/><rect x="794.6" y="363.9" width="9" height="5.4" fill="#2a5580" stroke="none"/><rect x="804.6" y="364.6" width="6.500" height="4.0" fill="#4f86c0" stroke="none"/><rect x="659.200" y="386.2" width="133.8" height="7.2" rx="1" fill="#3f74ad" fill-opacity=".6" stroke="#6da0d8" stroke-width=".9"/><rect x="660" y="387.09999999999997" width="18.700" height="5.4" fill="#244b70" stroke="none"/><rect x="775" y="387.09999999999997" width="9" height="5.4" fill="#2a5580" stroke="none"/><rect x="785" y="387.8" width="6.500" height="4.0" fill="#4f86c0" stroke="none"/><rect x="659.200" y="409.6" width="113.4" height="7.2" rx="1" fill="#3f74ad" fill-opacity=".6" stroke="#6da0d8" stroke-width=".9"/><rect x="660" y="410.5" width="18.700" height="5.4" fill="#244b70" stroke="none"/><rect x="754.6" y="410.5" width="9" height="5.4" fill="#2a5580" stroke="none"/><rect x="764.6" y="411.20000000000005" width="6.500" height="4.0" fill="#4f86c0" stroke="none"/><rect x="659.200" y="433" width="131.3" height="7.2" rx="1" fill="#3f74ad" fill-opacity=".6" stroke="#6da0d8" stroke-width=".9"/><rect x="660" y="433.9" width="18.700" height="5.4" fill="#244b70" stroke="none"/><rect x="772.5" y="433.9" width="9" height="5.4" fill="#2a5580" stroke="none"/><rect x="782.5" y="434.6" width="6.500" height="4.0" fill="#4f86c0" stroke="none"/></g><path d="M669.700 244.300L674.600 237.400 680.500 232.500 684.400 227.600 687.400 227.600 690.300 231.500 694.300 234.400 698.200 237.400 702.100 239.400 707.100 241.300 710 246.300" fill="none" stroke="#9bb9d8" stroke-width=".8"/><path d="M727.600 257.500H775" stroke="#6f9fd6" stroke-width=".5" stroke-dasharray="1 1"/><rect x="738.200" y="264" width="33.200" height="31" fill="#2d5f8f" stroke="#c5d9ee" stroke-width="1.300"/><rect x="735.800" y="261.500" width="38" height="36" fill="none" stroke="#6f9fd6" stroke-width=".5"/><path d="M754.800 295V329" stroke="#8fb0d2" stroke-width=".8"/><text x="701" y="305.300" text-anchor="middle" font-family="Liberation Sans,sans-serif" font-size="10.500" fill="#6f9fd6">12</text><text x="807.800" y="305.300" text-anchor="middle" font-family="Liberation Sans,sans-serif" font-size="10.500" fill="#6f9fd6">32</text><text x="729" y="235.300" font-family="Liberation Sans,sans-serif" font-size="5" font-weight="bold" fill="#5b8cc2">TEKO</text><text x="675.600" y="248.200" font-family="Liberation Sans,sans-serif" font-size="5.200" fill="#e6eef6">ImageView</text><text x="660.800" y="351.800" font-family="Liberation Sans,sans-serif" font-size="4.600" fill="#5b8cc2">TODAY</text><text x="681" y="369.3" font-family="Liberation Sans,sans-serif" font-size="5.600" fill="#6ea0d6" opacity=".55">Finish landing page concept</text><text x="681" y="392.5" font-family="Liberation Sans,sans-serif" font-size="5.600" fill="#6ea0d6" opacity=".55">Design app illustrations</text><text x="681" y="416" font-family="Liberation Sans,sans-serif" font-size="5.600" fill="#6ea0d6" opacity=".55">Javascript training</text><text x="681" y="439.4" font-family="Liberation Sans,sans-serif" font-size="5.600" fill="#6ea0d6" opacity=".55">Surprise Party for Matt</text><text x="685" y="258.300" font-family="Liberation Sans,sans-serif" font-size="27.300" fill="#fff" fill-opacity=".93" stroke="#27557f" stroke-width=".45">ImageView</text></svg></div></div></body></html>
